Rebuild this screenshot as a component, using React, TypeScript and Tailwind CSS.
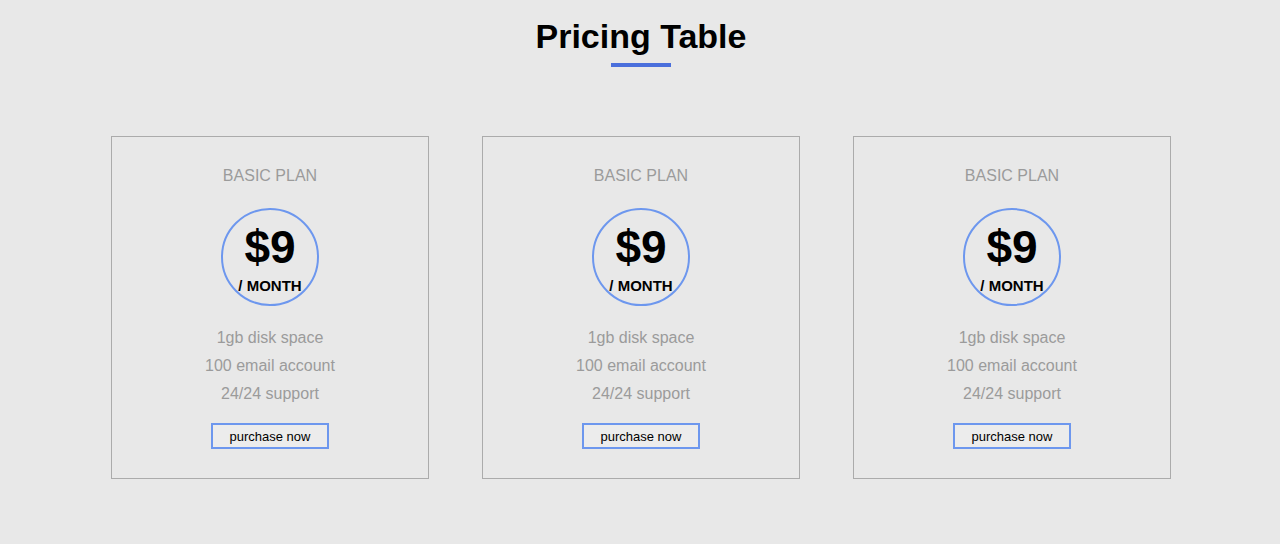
import React from "react";

type Plan = {
    name: string;
    price: string;
    period: string;
    features: string[];
};

const plans: Plan[] = [
    { name: "BASIC PLAN", price: "$9", period: "/ MONTH", features: ["1gb disk space", "100 email account", "24/24 support"] },
    { name: "BASIC PLAN", price: "$9", period: "/ MONTH", features: ["1gb disk space", "100 email account", "24/24 support"] },
    { name: "BASIC PLAN", price: "$9", period: "/ MONTH", features: ["1gb disk space", "100 email account", "24/24 support"] },
];

function PricingCard({ plan }: { plan: Plan }) {
    return (
        <div className="w-[318px] h-[343px] border border-[#ababab] flex flex-col items-center pt-[30px]">
            <h3 className="text-[16px] leading-[18px] text-[#9b9b9b] font-normal">{plan.name}</h3>

            {/* price bubble */}
            <div className="mt-[23px] w-[98px] h-[98px] rounded-full border-2 border-[#6d97ee] flex flex-col items-center pt-[14px]">
                <span className="text-[46px] leading-none font-bold text-black">{plan.price}</span>
                <span className="mt-[8px] text-[15px] leading-none font-bold text-black whitespace-nowrap">{plan.period}</span>
            </div>

            <ul className="mt-[18px] flex flex-col items-center">
                {plan.features.map((feature) => (
                    <li key={feature} className="text-[16px] leading-[28px] text-[#9b9b9b]">
                        {feature}
                    </li>
                ))}
            </ul>

            <button
                type="button"
                className="mt-[15px] w-[118px] h-[26px] border-2 border-[#6d97ee] bg-[#ececec] text-[13px] leading-none text-black flex items-center justify-center"
            >
                purchase now
            </button>
        </div>
    );
}

export default function App() {
    return (
        <div
            className="min-h-[544px] w-full bg-[#e8e8e8] flex flex-col items-center pt-[19px] pl-[2px]"
            style={{ fontFamily: '"Liberation Sans", Arial, sans-serif' }}
        >
            <h1 className="text-[34px] leading-none font-bold text-black">Pricing Table</h1>
            <div className="mt-[10px] w-[60px] h-[4px] bg-[#4a6fdc]" />

            <div className="mt-[69px] flex gap-[53px]">
                {plans.map((plan, i) => (
                    <PricingCard key={i} plan={plan} />
                ))}
            </div>
        </div>
    );
}
